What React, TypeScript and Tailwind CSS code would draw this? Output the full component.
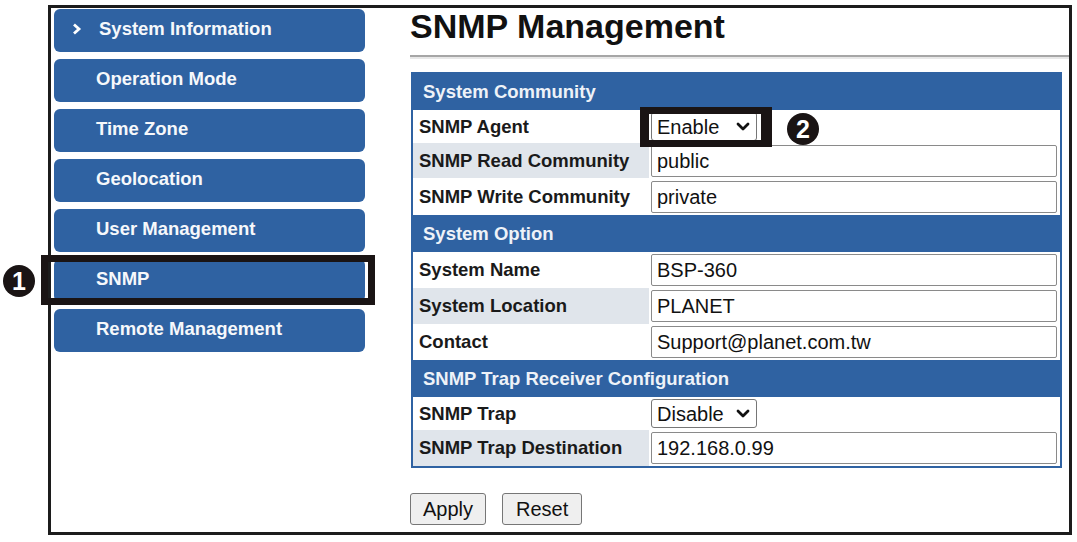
import React from 'react';

const BLUE = 'bg-[#2f62a2]';

const menu = [
  'System Information',
  'Operation Mode',
  'Time Zone',
  'Geolocation',
  'User Management',
  'SNMP',
  'Remote Management',
];

type Row =
  | { kind: 'head'; text: string; h: string }
  | { kind: 'input'; label: string; value: string; h: string; gray?: boolean }
  | { kind: 'select'; label: string; value: string; h: string; gray?: boolean };

const rows: Row[] = [
  { kind: 'head', text: 'System Community', h: 'h-[36px]' },
  { kind: 'select', label: 'SNMP Agent', value: 'Enable', h: 'h-[33px]' },
  { kind: 'input', label: 'SNMP Read Community', value: 'public', h: 'h-[35px]', gray: true },
  { kind: 'input', label: 'SNMP Write Community', value: 'private', h: 'h-[37px]' },
  { kind: 'head', text: 'System Option', h: 'h-[37px]' },
  { kind: 'input', label: 'System Name', value: 'BSP-360', h: 'h-[36px]' },
  { kind: 'input', label: 'System Location', value: 'PLANET', h: 'h-[36px]', gray: true },
  { kind: 'input', label: 'Contact', value: 'Support@planet.com.tw', h: 'h-[36px]' },
  { kind: 'head', text: 'SNMP Trap Receiver Configuration', h: 'h-[37px]' },
  { kind: 'select', label: 'SNMP Trap', value: 'Disable', h: 'h-[33px]' },
  { kind: 'input', label: 'SNMP Trap Destination', value: '192.168.0.99', h: 'h-[36px]', gray: true },
];

const Chevron = () => (
  <svg width="14" height="9" viewBox="0 0 14 9" className="ml-auto mr-[6px]">
    <polyline points="2,2 7,7 12,2" fill="none" stroke="#111" strokeWidth="2.8" strokeLinecap="round" strokeLinejoin="round" />
  </svg>
);

const Badge = ({ n, className }: { n: string; className: string }) => (
  <div className={`absolute w-[32px] h-[32px] rounded-full bg-[#1a1414] text-white text-[25px] font-bold leading-none flex items-center justify-center ${className}`}>
    {n}
  </div>
);

const App: React.FC = () => {
  return (
    <div className="relative w-[1077px] h-[542px] bg-white pt-[5px] overflow-hidden font-['Liberation_Sans',Arial,sans-serif]">
      <div className="ml-[48px] w-[1024px] h-[530px] border-[3px] border-[#1c1c1c] flex">
        {/* side menu */}
        <div className="w-[314px] pl-[3px] pt-[1px] flex flex-col gap-[7px]">
          {menu.map((m, i) => (
            <div key={m} className={`${BLUE} h-[43px] pb-[4px] rounded-[6px] flex items-center text-[#f6f8fb] text-[18.5px] font-bold ${i === 0 ? 'pl-[18px]' : 'pl-[42px]'}`}>
              {i === 0 && (
                <svg width="10" height="12" viewBox="0 0 10 12" className="mr-[17px]">
                  <polyline points="2,1.5 7,6 2,10.5" fill="none" stroke="#fff" strokeWidth="2.8" />
                </svg>
              )}
              {m}
            </div>
          ))}
        </div>

        {/* content */}
        <div className="ml-[45px] flex-1 flex flex-col">
          <h1 className="text-[34px] font-bold leading-[36px] text-[#111]">SNMP Management</h1>
          <div className="mt-[11px] h-[4px] border-t-2 border-t-[#a6a6a6] border-b-2 border-b-[#e8e8e8]" />

          <div className={`mt-[13px] ml-[1px] w-[651px] border-2 border-[#2f62a2] ${BLUE}`}>
            {rows.map((r, i) =>
              r.kind === 'head' ? (
                <div key={i} className={`${r.h} flex items-center pl-[10px] text-[18.5px] font-bold text-[#eef2f8]`}>
                  {r.text}
                </div>
              ) : (
                <div key={i} className={`${r.h} flex`}>
                  <div className={`w-[236px] flex items-center pl-[6px] text-[18.5px] font-bold text-[#1a1a1a] ${r.gray ? 'bg-[#e0e5eb]' : 'bg-white'}`}>
                    {r.label}
                  </div>
                  <div className="flex-1 bg-white flex items-center pl-[2px] pr-[3px]">
                    {r.kind === 'input' ? (
                      <div className="w-full h-[32px] border border-[#8a8a8a] rounded-[2px] flex items-center pl-[5px] text-[20px] text-[#111]">
                        {r.value}
                      </div>
                    ) : (
                      <div className="w-[106px] h-[29px] border border-[#767676] rounded-[3px] flex items-center pl-[5px] text-[20px] text-[#111]">
                        {r.value}
                        <Chevron />
                      </div>
                    )}
                  </div>
                </div>
              )
            )}
          </div>

          <div className="mt-[25px] flex gap-[16px] text-[20px] text-[#111]">
            <button className="h-[32px] px-[12px] bg-[#efefef] border border-[#767676] rounded-[3px]">Apply</button>
            <button className="h-[32px] px-[13px] bg-[#efefef] border border-[#767676] rounded-[3px]">Reset</button>
          </div>
        </div>
      </div>

      {/* annotations */}
      <div className="absolute left-[41px] top-[255px] w-[334px] h-[50px] border-[7px] border-[#1a1414]" />
      <Badge n="1" className="left-[3px] top-[265px]" />
      <div className="absolute left-[640px] top-[107px] w-[132px] h-[40px] border-y-[7px] border-l-[9px] border-r-[11px] border-[#1a1414]" />
      <Badge n="2" className="left-[787px] top-[113px]" />
    </div>
  );
};

export default App;
